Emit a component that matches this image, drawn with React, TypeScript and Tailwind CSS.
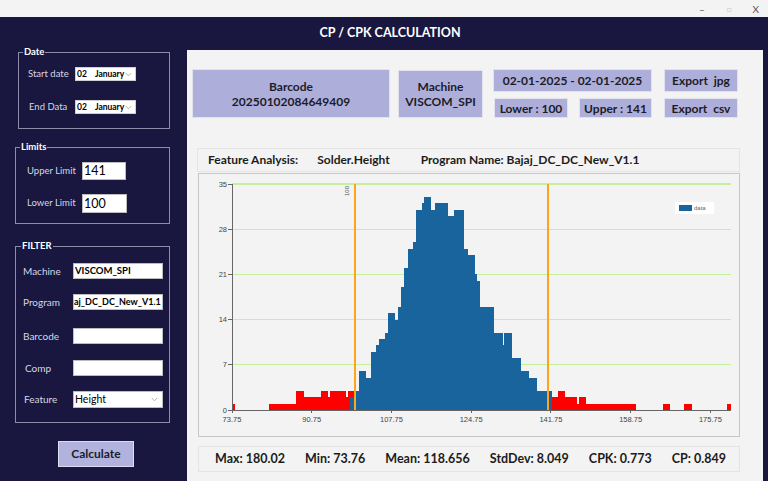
import React from 'react';

const K = 6.457;
const BASE = 410;

type Seg = [number, number, number];

const redSegs: Seg[] = [
  [231.5, 234.5, 1], [269, 295.5, 1], [295.5, 304, 3], [304, 320.5, 2], [320.5, 327.5, 3],
  [327.5, 330, 2], [330, 345.5, 3], [345.5, 348, 2], [348, 355, 3],
  [551.7, 558.3, 2], [558.3, 565, 3], [565, 576.7, 2], [576.7, 579, 1], [579, 586, 2],
  [586, 636, 1], [663, 670, 1], [684, 691.7, 1], [726.7, 730.7, 1],
];

const blueSegs: Seg[] = [
  [350, 354, 2], [354, 359.3, 3], [359.3, 366, 6], [366, 370.7, 5], [370.7, 376, 9],
  [376, 379.3, 10], [379.3, 385, 11], [385, 388.3, 12], [388.3, 395, 15], [395, 398.3, 14],
  [398.3, 400.7, 16], [400.7, 404, 19], [404, 408.3, 22], [408.3, 412.7, 25], [412.7, 416, 26],
  [416, 421.7, 31], [421.7, 424, 32], [424, 430.7, 33], [430.7, 435, 31], [435, 447.3, 32],
  [447.3, 448.3, 29], [448.3, 454, 30], [454, 463.3, 31], [463.3, 467.3, 25], [467.3, 475, 24],
  [475, 476.7, 21], [476.7, 479.3, 20], [479.3, 493.3, 16], [493.3, 502.3, 12], [502.3, 504, 10],
  [504, 511.7, 12], [511.7, 520.7, 8], [520.7, 529, 6], [529, 536.7, 5], [536.7, 551.7, 3],
];

const yTicks = [0, 7, 14, 21, 28, 35];
const xTicks = [73.75, 90.75, 107.75, 124.75, 141.75, 158.75, 175.75];
const xPos = (v: number) => 232 + (v - 73.75) * 4.69;

function Chart() {
  return (
    <svg width={540} height={262} viewBox="199 174 540 262" className="block" shapeRendering="crispEdges">
      {yTicks.slice(1).map((t) => (
        <line key={t} x1={232} x2={731} y1={BASE - t * K} y2={BASE - t * K} stroke="#c6ef9c" strokeWidth={1.2} />
      ))}
      {redSegs.map(([a, b, c], i) => (
        <rect key={'r' + i} x={a} y={BASE - c * K} width={b - a + 0.3} height={c * K} fill="#ff0000" />
      ))}
      {blueSegs.map(([a, b, c], i) => (
        <rect key={'b' + i} x={a} y={BASE - c * K} width={b - a + 0.3} height={c * K} fill="#19649d" />
      ))}
      <line x1={355} x2={355} y1={184} y2={410} stroke="#ffa51c" strokeWidth={2} />
      <line x1={547.5} x2={547.5} y1={184} y2={410} stroke="#ffa51c" strokeWidth={2} />
      <text x={349} y={191} fontSize={6} fill="#555" fontFamily="Liberation Sans, sans-serif" transform="rotate(-90 349 191)" textAnchor="middle">100</text>
      <line x1={232} x2={232} y1={184} y2={410} stroke="#666" strokeWidth={1} />
      <line x1={232} x2={731} y1={410} y2={410} stroke="#666" strokeWidth={1} />
      {yTicks.map((t) => (
        <g key={'yt' + t}>
          <line x1={228} x2={232} y1={BASE - t * K} y2={BASE - t * K} stroke="#666" />
          <text x={227} y={BASE - t * K + 2.5} fontSize={7.5} fill="#444" textAnchor="end" fontFamily="Liberation Sans, sans-serif">{t}</text>
        </g>
      ))}
      {xTicks.map((v) => (
        <g key={'xt' + v}>
          <line x1={xPos(v)} x2={xPos(v)} y1={410} y2={413} stroke="#666" />
          <text x={xPos(v)} y={422} fontSize={7.5} fill="#444" textAnchor="middle" fontFamily="Liberation Sans, sans-serif">{v.toFixed(2)}</text>
        </g>
      ))}
      <rect x={675} y={202} width={39} height={12} fill="#ffffff" />
      <rect x={679} y={205} width={13} height={5.5} fill="#19649d" />
      <text x={694} y={210} fontSize={6} fill="#666" fontFamily="Liberation Sans, sans-serif">data</text>
    </svg>
  );
}

function Chevron() {
  return (
    <svg width="7" height="5" viewBox="0 0 7 5" className="shrink-0">
      <path d="M0.8 1 L3.5 3.8 L6.2 1" fill="none" stroke="#a0a0a0" strokeWidth="0.8" />
    </svg>
  );
}

function DateSelect() {
  return (
    <div className="w-[61px] h-[14px] shrink-0 bg-white border border-[#cfcfcf] flex items-center pl-[1px] pr-[3px]">
      <span className="text-[8.5px] font-bold text-black leading-none whitespace-pre flex-1">02    January</span>
      <Chevron />
    </div>
  );
}

function Group({ label, className, children, labelLeft }: { label: string; className: string; children: React.ReactNode; labelLeft: string }) {
  return (
    <div className={'relative border border-[#8e8ca8] ' + className}>
      <span className={'absolute -top-[6px] px-[1px] bg-[#19173f] text-[9.5px] font-bold text-white leading-none ' + labelLeft}>{label}</span>
      {children}
    </div>
  );
}

function LavBtn({ className, children }: { className: string; children: React.ReactNode }) {
  return (
    <div className={'bg-[#aeaedb] border border-[#e2e2ee] flex flex-col items-center justify-center text-[#1c1c28] font-bold leading-[15px] ' + className}>
      {children}
    </div>
  );
}

export default function App() {
  return (
    <div className="w-[768px] h-[481px] overflow-hidden flex flex-col font-['Lato',sans-serif]">
      {/* window chrome */}
      <div className="h-[17px] bg-[#f3f3f3] flex items-center justify-end text-[10px] leading-none">
        <span className="text-[#555] mr-[22px]">–</span>
        <span className="text-[#c8c8c8] text-[8px] mr-[21px]">□</span>
        <span className="text-[#555] mr-[9px]">X</span>
      </div>
      <div className="flex-1 bg-[#19173f] flex flex-col">
        <div className="h-[33px] flex items-center justify-center pl-[12px] text-white font-bold text-[12.5px]">
          CP / CPK CALCULATION
        </div>
        <div className="flex flex-1">
          {/* sidebar */}
          <div className="w-[187px] flex flex-col text-[#d6d6e4] text-[9.5px]">
            <Group label="Date" labelLeft="left-[4px]" className="ml-[18px] mt-[2px] w-[152px] h-[77px] pl-[9px] pt-[14px]">
              <div className="flex items-center">
                <span className="w-[47px] shrink-0 whitespace-nowrap">Start date</span>
                <DateSelect />
              </div>
              <div className="flex items-center mt-[19px]">
                <span className="w-[47px] shrink-0 whitespace-nowrap pl-[1px]">End Data</span>
                <DateSelect />
              </div>
            </Group>
            <Group label="Limits" labelLeft="left-[4px]" className="ml-[15px] mt-[18px] w-[155px] h-[77px] pl-[11px] pt-[14px]">
              <div className="flex items-center">
                <span className="w-[55px] shrink-0 whitespace-nowrap">Upper Limit</span>
                <div className="w-[44px] h-[18px] shrink-0 bg-white border border-[#bcbcbc] text-[12.5px] text-black leading-[16px] pl-[1px]">141</div>
              </div>
              <div className="flex items-center mt-[14px]">
                <span className="w-[55px] shrink-0 whitespace-nowrap">Lower Limit</span>
                <div className="w-[45px] h-[19px] shrink-0 bg-white border border-[#bcbcbc] text-[12.5px] text-black leading-[17px] pl-[1px]">100</div>
              </div>
            </Group>
            <Group label="FILTER" labelLeft="left-[5px]" className="ml-[15px] mt-[22px] w-[155px] h-[177px] pl-[7px] pt-[16px] text-[10px]">
              <div className="flex items-center">
                <span className="w-[50px] shrink-0 whitespace-nowrap">Machine</span>
                <div className="w-[90px] h-[16px] shrink-0 bg-white border border-[#bcbcbc] text-[9.5px] font-bold text-black leading-[14px] pl-[1px]">VISCOM_SPI</div>
              </div>
              <div className="flex items-center mt-[15px]">
                <span className="w-[50px] shrink-0 whitespace-nowrap">Program</span>
                <div className="w-[90px] h-[16px] shrink-0 bg-white border border-[#bcbcbc] text-[9px] font-bold text-black leading-[14px] overflow-hidden whitespace-nowrap">aj_DC_DC_New_V1.1</div>
              </div>
              <div className="flex items-center mt-[18px]">
                <span className="w-[50px] shrink-0 whitespace-nowrap">Barcode</span>
                <div className="w-[90px] h-[16px] shrink-0 bg-white border border-[#bcbcbc]" />
              </div>
              <div className="flex items-center mt-[16px]">
                <span className="w-[50px] shrink-0 whitespace-nowrap pl-[2px]">Comp</span>
                <div className="w-[90px] h-[16px] shrink-0 bg-white border border-[#bcbcbc]" />
              </div>
              <div className="flex items-center mt-[15px]">
                <span className="w-[50px] shrink-0 whitespace-nowrap pl-[1px]">Feature</span>
                <div className="w-[90px] h-[17px] shrink-0 bg-white border border-[#bcbcbc] flex items-center pl-[1px] pr-[4px]">
                  <span className="flex-1 text-[10.5px] text-black leading-none">Height</span>
                  <Chevron />
                </div>
              </div>
            </Group>
            <div className="ml-[58px] mt-[18px] w-[76px] h-[26px] bg-[#b2b2df] border border-[#dcdcee] flex items-center justify-center text-[12px] font-bold text-[#1c1c28]">
              Calculate
            </div>
          </div>
          {/* main panel */}
          <div className="w-[576px] bg-[#f3f3f3] flex flex-col">
            <div className="flex items-start pl-[5px] pt-[19px] text-[12px]">
              <LavBtn className="w-[198px] h-[49px] border-[#9fc6e6]">
                <span>Barcode</span>
                <span>20250102084649409</span>
              </LavBtn>
              <LavBtn className="ml-[8px] w-[85px] h-[48px] mt-[1px]">
                <span>Machine</span>
                <span>VISCOM_SPI</span>
              </LavBtn>
              <div className="ml-[10px] flex flex-col">
                <LavBtn className="w-[159px] h-[23px]">02-01-2025 - 02-01-2025</LavBtn>
                <div className="flex mt-[6px] gap-[11px]">
                  <LavBtn className="w-[74px] h-[20px] ml-[1px]">Lower : 100</LavBtn>
                  <LavBtn className="w-[73px] h-[20px]">Upper : 141</LavBtn>
                </div>
              </div>
              <div className="ml-[12px] flex flex-col">
                <LavBtn className="w-[74px] h-[23px] whitespace-pre">Export  jpg</LavBtn>
                <LavBtn className="w-[74px] h-[20px] mt-[6px] whitespace-pre">Export  csv</LavBtn>
              </div>
            </div>
            <div className="ml-[10px] mt-[30px] w-[543px] h-[24px] border border-[#e4e4e4] flex items-center pl-[10px] text-[12px] font-bold text-[#1c1c1c]">
              <span>Feature Analysis:</span>
              <span className="ml-[19px]">Solder.Height</span>
              <span className="ml-[31px]">Program Name: Bajaj_DC_DC_New_V1.1</span>
            </div>
            <div className="ml-[11px] mt-[1px] w-[542px] h-[264px] border border-[#c6c6c6]">
              <Chart />
            </div>
            <div className="ml-[11px] mt-[9px] w-[542px] h-[26px] border border-[#e4e4e4] flex items-center justify-between pl-[16px] pr-[13px] text-[12.5px] font-bold text-[#1c1c1c]">
              <span>Max: 180.02</span>
              <span>Min: 73.76</span>
              <span>Mean: 118.656</span>
              <span>StdDev: 8.049</span>
              <span>CPK: 0.773</span>
              <span>CP: 0.849</span>
            </div>
          </div>
          <div className="flex-1" />
        </div>
      </div>
    </div>
  );
}
